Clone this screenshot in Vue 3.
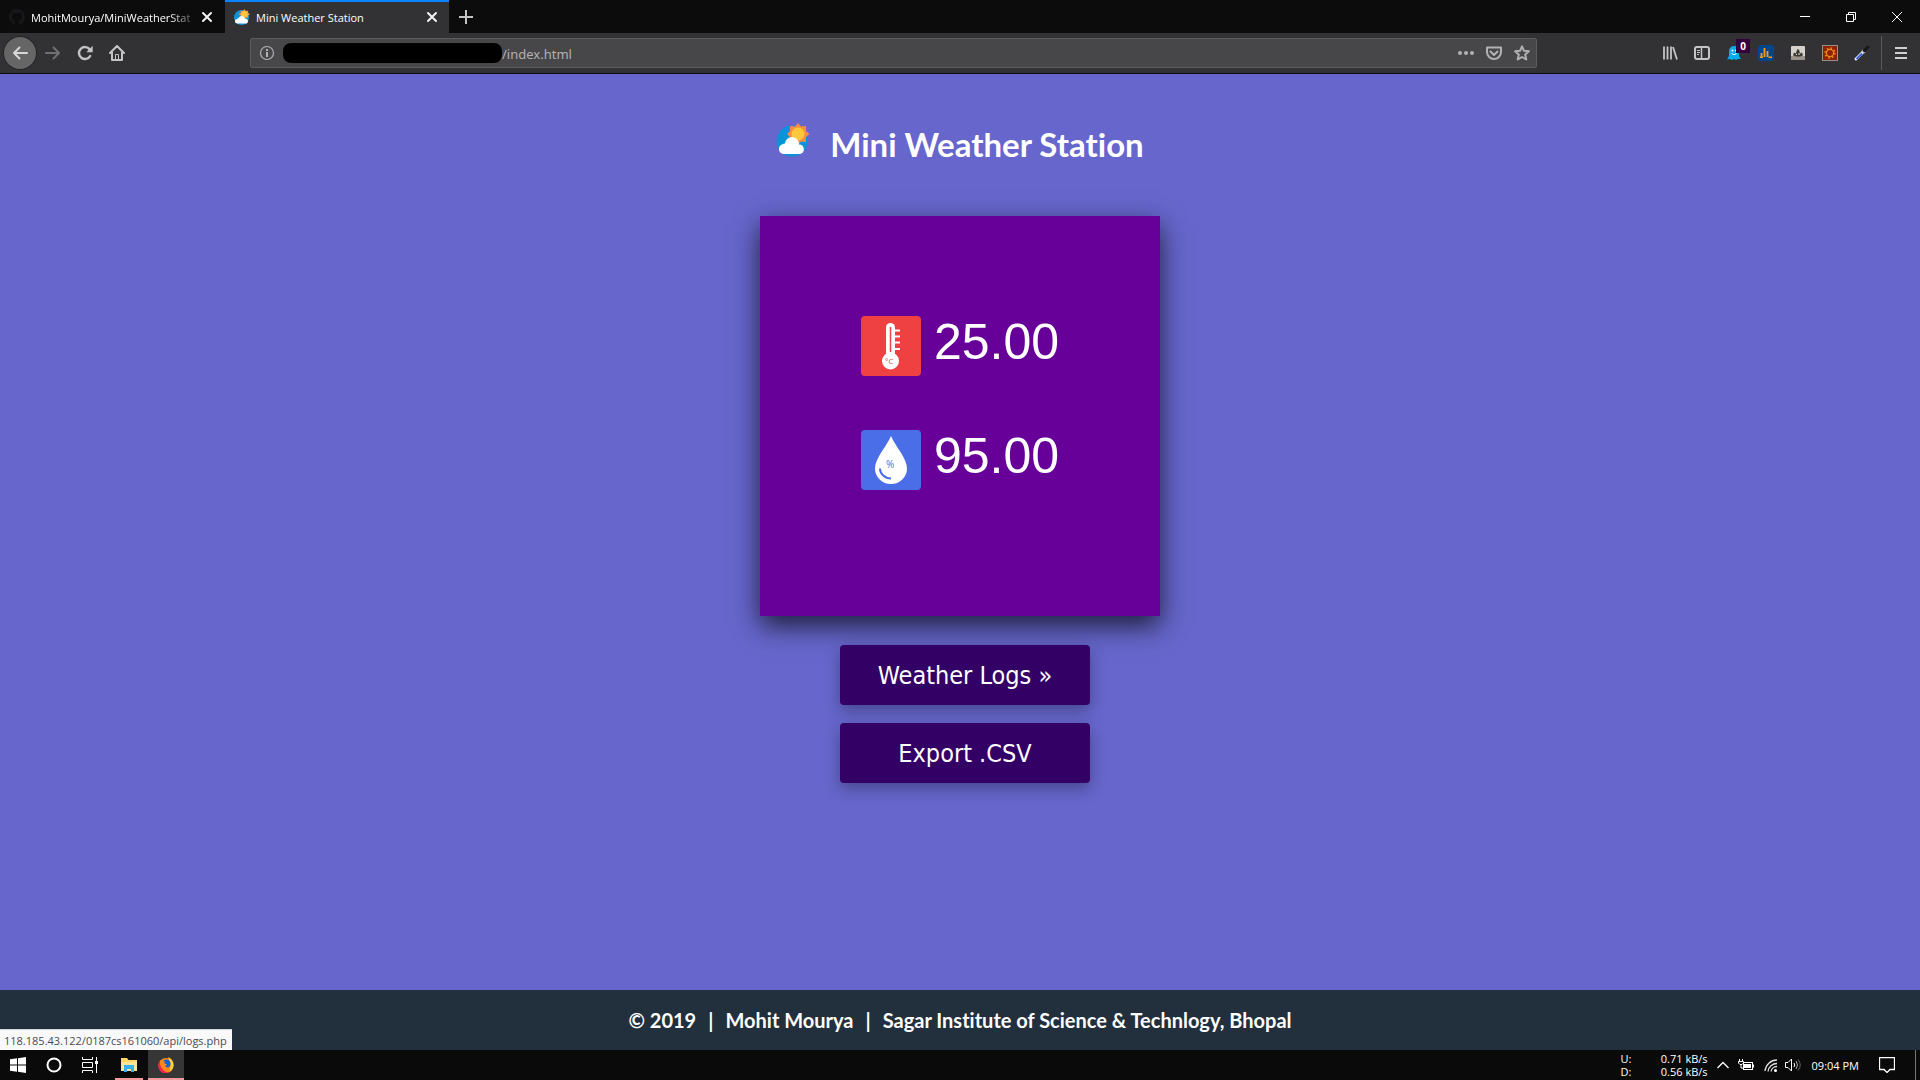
<script setup>
const tabs = [
  { title: 'MohitMourya/MiniWeatherStat', active: false },
  { title: 'Mini Weather Station', active: true },
]
const readings = [
  { kind: 'temperature', value: '25.00' },
  { kind: 'humidity', value: '95.00' },
]
const traffic = [
  { label: 'U:', rate: '0.71 kB/s' },
  { label: 'D:', rate: '0.56 kB/s' },
]
</script>

<template>
  <div class="screen">
    <header class="tabbar">
      <div v-for="tab in tabs" :key="tab.title" class="tab" :class="{ active: tab.active }">
        <svg v-if="tab.active" class="i16" viewBox="0 0 34 34">
          <circle cx="16" cy="18" r="16" fill="#0a93d6" />
          <path d="M22 0l3 4 5-1v5l4 3-4 3v5l-5-1-3 4-3-4-5 1v-5l-4-3 4-3V3l5 1z" fill="#f98d45" />
          <circle cx="22" cy="11" r="7" fill="#fdc83b" />
          <path d="M7 31a5 5 0 0 1 0-10 5 5 0 0 1 3-2 7 7 0 0 1 13 1 6 6 0 0 1 4 11z" fill="#fff" />
        </svg>
        <svg v-else class="i16" viewBox="0 0 16 16">
          <path fill="#17181a" fill-rule="evenodd" d="M8 0C3.58 0 0 3.58 0 8c0 3.54 2.29 6.53 5.47 7.59.4.07.55-.17.55-.38 0-.19-.01-.82-.01-1.49-2.01.37-2.53-.49-2.69-.94-.09-.23-.48-.94-.82-1.13-.28-.15-.68-.52-.01-.53.63-.01 1.08.58 1.23.82.72 1.21 1.87.87 2.33.66.07-.52.28-.87.51-1.07-1.78-.2-3.64-.89-3.64-3.95 0-.87.31-1.59.82-2.15-.08-.2-.36-1.02.08-2.12 0 0 .67-.21 2.2.82a7.6 7.6 0 0 1 4 0c1.53-1.04 2.2-.82 2.2-.82.44 1.1.16 1.92.08 2.12.51.56.82 1.27.82 2.15 0 3.07-1.87 3.75-3.65 3.95.29.25.54.73.54 1.48 0 1.07-.01 1.93-.01 2.2 0 .21.15.46.55.38A8 8 0 0 0 16 8c0-4.42-3.58-8-8-8z" />
        </svg>
        <span class="tab-title">{{ tab.title }}</span>
        <button class="close" aria-label="Close tab">
          <svg width="12" height="12" viewBox="0 0 12 12"><path d="M2 2l8 8M10 2l-8 8" stroke="#f4f4f5" stroke-width="2" stroke-linecap="round" /></svg>
        </button>
      </div>
      <button class="newtab" aria-label="New tab">
        <svg width="14" height="14" viewBox="0 0 14 14"><path d="M7 0v14M0 7h14" stroke="#c4c4c5" stroke-width="2" /></svg>
      </button>
      <div class="winctl">
        <button aria-label="Minimize"><svg width="10" height="10" viewBox="0 0 10 10"><path d="M0 4.500h10" stroke="#fff" /></svg></button>
        <button aria-label="Restore"><svg width="10" height="10" viewBox="0 0 10 10"><path d="M.5 2.500h7v7h-7zM2.500 2.500v-2h7v7h-2" fill="none" stroke="#fff" /></svg></button>
        <button aria-label="Close"><svg width="10" height="10" viewBox="0 0 10 10"><path d="M0 0l10 10M10 0L0 10" stroke="#fff" /></svg></button>
      </div>
    </header>

    <nav class="toolbar">
      <div class="navbtns">
        <button class="back" aria-label="Back"><svg class="i16" viewBox="0 0 16 16"><path d="M15 8H2M7.500 2.500L2 8l5.500 5.500" fill="none" stroke="#d7d7d8" stroke-width="2" stroke-linecap="round" stroke-linejoin="round" /></svg></button>
        <button aria-label="Forward"><svg class="i16" viewBox="0 0 16 16"><path d="M1 8h13M8.500 2.500L14 8l-5.500 5.500" fill="none" stroke="#707071" stroke-width="2" stroke-linecap="round" stroke-linejoin="round" /></svg></button>
        <button aria-label="Reload"><svg class="i16" viewBox="0 0 16 16"><path d="M12.800 4.500A6 6 0 1 0 13.200 11" fill="none" stroke="#c4c4c5" stroke-width="2.400" stroke-linecap="round" /><path d="M15.700.8V7.200H9.300z" fill="#c4c4c5" /></svg></button>
        <button aria-label="Home"><svg class="i16" viewBox="0 0 16 16"><path d="M1 8l7-7 7 7M3 7.500V15h10V7.500" fill="none" stroke="#c4c4c5" stroke-width="2" stroke-linecap="round" stroke-linejoin="round" /><path d="M6.500 15V9.500h3V15" fill="none" stroke="#c4c4c5" /></svg></button>
      </div>
      <div class="urlbar">
        <svg class="i16" viewBox="0 0 16 16"><circle cx="8" cy="8" r="6.500" fill="none" stroke="#b1b1b3" stroke-width="1.200" /><path d="M7 7h2v5H7zM7 4h2v2H7z" fill="#b1b1b3" /></svg>
        <span class="redacted"></span>
        <input class="url" aria-label="Address" value="/index.html" />
        <svg class="i16" viewBox="0 0 16 16" fill="#b1b1b3"><circle cx="2" cy="8" r="2" /><circle cx="8" cy="8" r="2" /><circle cx="14" cy="8" r="2" /></svg>
        <svg class="i16" viewBox="0 0 16 16"><path d="M1 2.500h14v4.500a7 7 0 0 1-14 0zM4.500 6.500L8 10l3.500-3.500" fill="none" stroke="#b1b1b3" stroke-width="2" stroke-linejoin="round" stroke-linecap="round" /></svg>
        <svg class="i16" viewBox="0 0 16 16"><path d="M8 1.300l2 4.500 4.900.5-3.700 3.300 1.100 4.900L8 12l-4.300 2.500 1.100-4.900L1.100 6.300 6 5.800z" fill="none" stroke="#b1b1b3" stroke-width="2" stroke-linejoin="round" /></svg>
      </div>
      <div class="extensions">
        <button aria-label="Library"><svg class="i16" viewBox="0 0 16 16"><path d="M2 1.500v13M5.500 1.500v13M9 1.500v13M11 2l4 12.500" stroke="#c4c4c5" stroke-width="1.800" /></svg></button>
        <button aria-label="Sidebars"><svg class="i16" viewBox="0 0 16 16"><rect x="1" y="2" width="14" height="12" rx="2" fill="none" stroke="#c4c4c5" stroke-width="2" /><path d="M7.500 2v12" stroke="#c4c4c5" stroke-width="1.500" /><path d="M3 5.500h3M3 7.500h3M3 9.500h2" stroke="#c4c4c5" /></svg></button>
        <button class="ghost" aria-label="Ghostery">
          <svg class="i16" viewBox="0 0 16 16"><path d="M3 6a5 5 0 0 1 10 0v5l2 3-3 0-2 1-2-1-2 1-2-1-3 .5L3 11z" fill="#00aef0" /><circle cx="6.500" cy="5.500" r="1" fill="#fff" /><circle cx="10" cy="5.500" r="1" fill="#fff" /><path d="M5.500 8.500q2.500 2.500 5 0" stroke="#fff" fill="none" /></svg>
          <span class="badge">0</span>
        </button>
        <button aria-label="Analytics"><svg class="i16" viewBox="0 0 16 16"><rect width="16" height="16" rx="3" fill="#00468c" /><path d="M3.500 8v4M6.500 3v9M9.500 6v6" stroke="#f99d1c" stroke-width="1.800" /><path d="M2 12.300h3M10.500 12.300h3.500" stroke="#f99d1c" stroke-width="1.500" /></svg></button>
        <button aria-label="User agent"><svg class="i16" viewBox="0 0 16 16"><rect x="1" y="1" width="14" height="14" rx="1" fill="#d5d0cb" /><rect x="1" y="11" width="14" height="4" fill="#9b9289" /><path d="M3 10.500l1-3 2 1 1-4h2l1 4 2-1 1 3-3 1H6z" fill="#3b3733" /><path d="M6 9l1 1M9 8v2" stroke="#eee" /></svg></button>
        <button aria-label="Gear"><svg class="i16" viewBox="0 0 16 16"><rect x=".5" y=".5" width="15" height="15" fill="#8f2200" stroke="#9a8f8c" /><circle cx="8" cy="8" r="3.600" fill="none" stroke="#e8921c" stroke-width="1.200" /><circle cx="8" cy="8" r="4.900" fill="none" stroke="#e8921c" stroke-width="1.600" stroke-dasharray="1.500 2.348" /></svg></button>
        <button aria-label="Color picker"><svg class="i16" viewBox="0 0 16 16"><path d="M2 14l7-7" stroke="#dfe6ff" stroke-width="3" stroke-linecap="round" /><path d="M2.500 14l5.500-5.500" stroke="#3c62dc" stroke-width="1.800" /><path d="M8 5l3 3" stroke="#92989c" stroke-width="1.500" /><path d="M10.500 5.500L14 2" stroke="#17181a" stroke-width="3" stroke-linecap="round" /></svg></button>
        <span class="sep"></span>
        <button aria-label="Menu"><svg class="i16" viewBox="0 0 16 16"><path d="M2 3h12M2 8h12M2 13h12" stroke="#d0d0d1" stroke-width="2" /></svg></button>
      </div>
    </nav>

    <main class="page">
      <h1 class="heading">
        <svg class="logo" viewBox="0 0 34 34">
          <circle cx="16" cy="18" r="15.500" fill="#0a93d6" />
          <path d="M22 0l3 3.500 5-.5v5l3.500 3-3.500 3v5l-5-.5-3 3.500-3-3.500-5 .5v-5l-3-3 3-3V3l5 .5z" fill="#f98d45" />
          <circle cx="22" cy="11" r="6.500" fill="#fdc83b" />
          <path d="M7 31a5 5 0 0 1-1-9.500 5 5 0 0 1 3-1 7 7 0 0 1 14 1 4.800 4.800 0 0 1 1 9.500z" fill="#fff" />
        </svg>
        Mini Weather Station
      </h1>

      <section class="card">
        <div v-for="r in readings" :key="r.kind" class="reading">
          <svg v-if="r.kind === 'temperature'" class="tile" viewBox="0 0 60 60">
            <rect width="60" height="60" rx="4" fill="#ef4141" />
            <rect x="25" y="7" width="9" height="34" rx="4.500" fill="#fff" />
            <circle cx="29.500" cy="45" r="8.500" fill="#fff" />
            <path d="M29.500 11v25" stroke="#ef4141" stroke-width="1.500" />
            <path d="M33 14.500h6M33 20.500h6M33 26.500h6M33 33h6" stroke="#fff" stroke-width="2" />
            <text x="24" y="48" class="unit" fill="#ef4141">°C</text>
          </svg>
          <svg v-else class="tile" viewBox="0 0 60 60">
            <rect width="60" height="60" rx="4" fill="#4a6ee8" />
            <path d="M30 6C26 16 14 28 14 38.500a16 15.500 0 0 0 32 0C46 28 34 16 30 6z" fill="#fff" />
            <path d="M19 38.500a11 10 0 0 0 11 10" fill="none" stroke="#4a6ee8" stroke-width="2" />
            <text x="25" y="38" class="pct" fill="#4a6ee8">%</text>
          </svg>
          <span class="value">{{ r.value }}</span>
        </div>
      </section>

      <div class="actions">
        <a class="btn" href="#logs">Weather Logs »</a>
        <a class="btn" href="#export">Export .CSV</a>
      </div>
    </main>

    <footer class="credits">
      <span>© 2019</span><span>|</span><span>Mohit Mourya</span><span>|</span><span>Sagar Institute of Science &amp; Technlogy, Bhopal</span>
      <div class="status">118.185.43.122/0187cs161060/api/logs.php</div>
    </footer>

    <div class="taskbar">
      <div class="apps">
        <button aria-label="Start"><svg class="i16" viewBox="0 0 16 16" fill="#fff"><path d="M0 2.300L7 1.300V7.500H0zM8 1.200L16 0v7.500H8zM0 8.500h7v6.200L0 13.700zM8 8.500h8V16l-8-1.200z" /></svg></button>
        <button aria-label="Search"><svg class="i16" viewBox="0 0 16 16"><circle cx="8" cy="8" r="6.500" fill="none" stroke="#fff" stroke-width="2" /></svg></button>
        <button aria-label="Task view"><svg class="i16" viewBox="0 0 16 16"><path d="M.5 0v2.500h10V0M.5 5.500h10v5H.5zM.5 16v-2.500h10V16M14.500 0v16" fill="none" stroke="#fff" /><rect x="13" y="4" width="3" height="3" fill="#fff" /></svg></button>
        <button class="running" aria-label="File Explorer"><svg class="i16" viewBox="0 0 16 16"><path d="M0 1h6l1.500 2H16v11H0z" fill="#ffd767" /><path d="M0 5h16v9H0z" fill="#ffe596" /><path d="M3 8h10v7h-3v-3H6v3H3z" fill="#36b0ea" /></svg></button>
        <button class="running current" aria-label="Firefox"><svg class="i16" viewBox="0 0 16 16">
          <circle cx="8" cy="8.500" r="7.500" fill="#ff8a16" />
          <path d="M10 .3c3.500 1 6 4.500 5.500 8.500a7.500 7.500 0 0 1-4 6C13 11 12.500 5 10 .3z" fill="#ffd42e" />
          <path d="M.5 7a7.500 7.500 0 0 0 11 8.500C7 15.500 3 12 2.500 7L2 3z" fill="#f0264f" />
          <circle cx="8.300" cy="6.800" r="4.300" fill="#1c5fd0" />
          <path d="M2 3l2 1.500L7 4.200 6.500 6.500 9 7.500l-2 1.800L10.500 11c-4 2.500-8 0-8.200-4z" fill="#ff8a16" />
        </svg></button>
      </div>
      <div class="tray">
        <dl class="traffic">
          <div v-for="t in traffic" :key="t.label"><dt>{{ t.label }}</dt><dd>{{ t.rate }}</dd></div>
        </dl>
        <svg class="chev" width="12" height="16" viewBox="0 0 12 16"><path d="M.5 11L6 5.500 11.500 11" fill="none" stroke="#fff" stroke-width="1.300" /></svg>
        <svg class="i16" viewBox="0 0 16 16"><rect x="5.500" y="5.500" width="9" height="7" fill="none" stroke="#fff" /><path d="M6 7h7v4H6zM15 7.500h1v3h-1z" fill="#fff" /><path d="M1.500 2v2M4.500 2v2M3 7v4h3" stroke="#fff" fill="none" /><path d="M.5 4.500h5v1.500L4 7.500H2L.5 6z" fill="#0a0a0a" stroke="#fff" /></svg>
        <svg class="i16 wifi" viewBox="0 0 16 16" fill="none" stroke="#ddd" stroke-width="1.300"><path d="M2 14A12 12 0 0 1 14 3M5 14.500A9 9 0 0 1 14 6.500M8 14.500a6 6 0 0 1 6-5" /><circle cx="12.500" cy="13.500" r="1.500" fill="#fff" stroke="none" /></svg>
        <svg class="i16" viewBox="0 0 16 16" fill="none"><path d="M.5 5.500h2.500l3.500-3.500v12L3 10.500H.5z" stroke="#fff" /><path d="M9 6q1.500 2 0 4" stroke="#fff" /><path d="M11 4q3 4 0 8" stroke="#aaa" /><path d="M13 2.500q4.500 5.500 0 11" stroke="#666" /></svg>
        <time class="clock">09:04 PM</time>
        <svg class="i16" viewBox="0 0 16 16"><path d="M.5.5h15v12H11L8 15.500 5 12.500H.5z" fill="none" stroke="#fff" stroke-width="1.300" /></svg>
        <span class="peek"></span>
      </div>
    </div>
  </div>
</template>

<style>
body { margin: 0; }
</style>

<style scoped>
.screen {
  display: flex;
  flex-direction: column;
  min-height: 100vh;
  background: #6666cc;
  font-family: "Open Sans", "Noto Sans", sans-serif;
  font-size: 11px;
  color: #fff;
}
button {
  display: flex;
  align-items: center;
  justify-content: center;
  padding: 0;
  border: 0;
  background: none;
}
svg { display: block; flex: none; }
.i16 { width: 16px; height: 16px; }

.tabbar { display: flex; height: 33px; background: #0c0c0d; }
.tab {
  box-sizing: border-box;
  display: flex;
  align-items: center;
  width: 225px;
  height: 33px;
  padding: 0 10px 0 9px;
}
.tab:not(.active) .tab-title { mask-image: linear-gradient(to right, #000 138px, transparent 168px); }
.tab.active { width: 224px; padding-right: 9px; background: #323234; box-shadow: inset 0 2px #0a84ff; }
.tab-title { flex: 1; margin: 2px 0 0 6px; white-space: nowrap; }
.close { width: 16px; height: 16px; margin-left: 3px; }
.newtab { width: 33px; }
.winctl { display: flex; margin-left: auto; align-items: center; }
.winctl button { width: 46px; height: 33px; }

.toolbar {
  box-sizing: border-box;
  display: flex;
  align-items: center;
  height: 41px;
  border-bottom: 1px solid #0c0c0d;
  background: #323234;
}
.navbtns { display: flex; align-items: center; width: 250px; padding-left: 4px; box-sizing: border-box; }
.navbtns button { width: 32px; height: 32px; }
.navbtns .back { border-radius: 50%; background: #666667; box-shadow: 0 0 0 1px #252526; margin-right: 1px; }
.urlbar {
  box-sizing: border-box;
  display: flex;
  flex: 1;
  align-items: center;
  height: 30px;
  padding: 0 6px 0 8px;
  gap: 12px;
  border: 1px solid #5c5c5e;
  border-radius: 2px;
  background: #474749;
}
.redacted { width: 219px; height: 20px; margin-left: -4px; border-radius: 8px; background: #000; }
.url {
  flex: 1;
  min-width: 0;
  height: 20px;
  margin-left: -12px;
  padding: 2px 0 0;
  border: 0;
  background: none;
  color: #b1b1b3;
  font: 13px "Noto Sans", "Open Sans", sans-serif;
}
.extensions { display: flex; align-items: center; justify-content: flex-end; width: 383px; padding-right: 3px; box-sizing: border-box; }
.extensions button { width: 32px; height: 32px; }
.ghost { position: relative; }
.badge {
  position: absolute;
  top: 2px;
  right: 0;
  width: 14px;
  height: 14px;
  background: #32003c;
  color: #fff;
  font: bold 10px/14px "Open Sans", sans-serif;
  text-align: center;
}
.sep { width: 1px; height: 34px; margin: 0 3px; background: #5a5a5c; }

.page { display: flex; flex: 1; flex-direction: column; align-items: center; }
.heading {
  display: flex;
  align-items: center;
  gap: 20px;
  height: 40px;
  margin: 50px 0 52px;
  font: 700 33px/40px Lato, "Open Sans", sans-serif;
  font-variant-ligatures: none;
}
.logo { width: 34px; height: 34px; margin-top: -8px; }
.card {
  box-sizing: border-box;
  display: flex;
  flex-direction: column;
  align-items: center;
  gap: 54px;
  width: 400px;
  height: 400px;
  padding-top: 100px;
  background: #660099;
  box-shadow: 0 10px 25px rgba(0, 0, 0, 0.7);
}
.reading { display: flex; gap: 13px; height: 60px; }
.tile { width: 60px; height: 60px; }
.unit { font: 8px "Open Sans", sans-serif; }
.pct { font: 10px "Open Sans", sans-serif; }
.value { font: 50px/52px "Liberation Sans", Arial, sans-serif; }
.actions { display: flex; flex-direction: column; gap: 18px; margin: 29px 0 0 10px; }
.btn {
  box-sizing: border-box;
  width: 250px;
  height: 60px;
  padding-top: 1px;
  border-radius: 4px;
  background: #330066;
  box-shadow: 0 6px 16px rgba(0, 0, 0, 0.3);
  color: #fff;
  font: 25px/60px "DejaVu Sans Condensed", "DejaVu Sans", sans-serif;
  text-align: center;
  text-decoration: none;
}

.credits {
  position: relative;
  display: flex;
  align-items: center;
  justify-content: center;
  gap: 12px;
  height: 60px;
  background: #222f3c;
  font: 700 20px/24px Lato, "Open Sans", sans-serif;
  font-variant-ligatures: none;
}
.status {
  position: absolute;
  bottom: 0;
  left: 0;
  padding: 1px 5px 0 4px;
  border-top: 1px solid #d4d4d6;
  background: #f9f9fa;
  color: #4a4a4f;
  font: 11px/19px "Open Sans", sans-serif;
}

.taskbar { display: flex; justify-content: space-between; height: 30px; background: #0a0a0a; }
.apps { display: flex; }
.apps button { width: 36px; height: 30px; }
.apps .running { width: 28px; margin-left: 7px; box-shadow: inset 0 -2px #f59a9d; }
.apps .current { width: 36px; margin-left: 5px; background: #363636; }
.tray { display: flex; align-items: center; gap: 9px; }
.traffic { width: 87px; margin: 0; line-height: 13px; }
.traffic div { display: flex; justify-content: space-between; }
.traffic dd { margin: 0; }
.wifi { margin-right: -3px; }
.clock { margin: 0 11px 0 2px; }
.peek { width: 1px; height: 30px; margin: 0 4px 0 11px; background: #777; }
</style>
